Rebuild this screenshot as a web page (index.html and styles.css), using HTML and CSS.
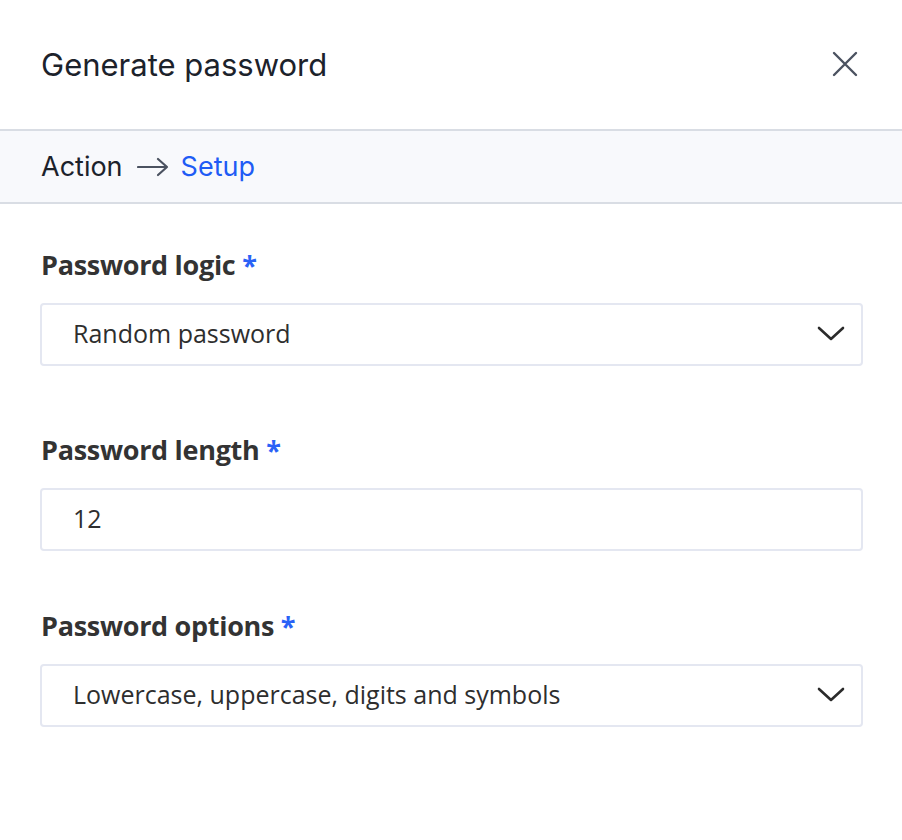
FILE: index.html
```html
<!DOCTYPE html>
<html>
<head>
<meta charset="utf-8">
<link rel="stylesheet" href="styles.css">
</head>
<body>
<div class="panel">
  <header class="head">
    <h1 class="title">Generate password</h1>
    <button class="close" aria-label="Close">
      <svg width="26" height="26" viewBox="0 0 26 26"><path d="M2 2 L24 24 M24 2 L2 24" stroke="#4b5260" stroke-width="2.4" stroke-linecap="round" fill="none"/></svg>
    </button>
  </header>
  <nav class="crumbs">
    <span class="crumb">Action</span>
    <svg class="arrow" width="32" height="20" viewBox="0 0 32 20"><path d="M1 10 H30 M21 2 L30 10 L21 18" stroke="#4b5260" stroke-width="2.2" fill="none" stroke-linecap="round" stroke-linejoin="round"/></svg>
    <span class="crumb active">Setup</span>
  </nav>
  <form class="form">
    <div class="field f1">
      <label class="label">Password logic <span class="req">*</span></label>
      <div class="box select"><span>Random password</span>
        <svg width="28" height="16" viewBox="0 0 28 16"><path d="M2 2 L14 13 L26 2" stroke="#2b2b2b" stroke-width="2.6" fill="none" stroke-linecap="round" stroke-linejoin="round"/></svg>
      </div>
    </div>
    <div class="field f2">
      <label class="label">Password length <span class="req">*</span></label>
      <div class="box"><span>12</span></div>
    </div>
    <div class="field f3">
      <label class="label">Password options <span class="req">*</span></label>
      <div class="box select"><span>Lowercase, uppercase, digits and symbols</span>
        <svg width="28" height="16" viewBox="0 0 28 16"><path d="M2 2 L14 13 L26 2" stroke="#2b2b2b" stroke-width="2.6" fill="none" stroke-linecap="round" stroke-linejoin="round"/></svg>
      </div>
    </div>
  </form>
</div>
</body>
</html>
```
FILE: styles.css
```css
* { box-sizing: border-box; }
html, body { margin: 0; padding: 0; background: #fff; }
body { font-family: "Open Sans", "Noto Sans", sans-serif; }
.panel { width: 902px; height: 840px; }
.head {
  height: 129px;
  display: flex;
  align-items: center;
  justify-content: space-between;
  padding: 0 44px 0 41px;
}
.title {
  margin: 0;
  font-family: Inter, "Noto Sans", sans-serif;
  font-weight: 400;
  font-size: 31px;
  line-height: 40px;
  color: #1c222b;
}
.close { border: 0; background: none; padding: 0; display: flex; margin-top: -2px; }
.crumbs {
  height: 75px;
  background: #f8f9fc;
  border-top: 2px solid #d9dde4;
  border-bottom: 2px solid #d9dde4;
  display: flex;
  align-items: center;
  padding: 0 41px;
  font-family: Inter, "Noto Sans", sans-serif;
  font-size: 27px;
}
.crumb { color: #1c222b; }
.crumb.active { color: #1f5cf5; }
.arrow { margin: 1px 12px 0 14px; }
.form { padding: 0 39px 0 40px; }
.label {
  display: block;
  font-weight: 700;
  font-size: 27px;
  line-height: 32px;
  color: #333333;
  margin-left: 1px;
  letter-spacing: -0.3px;
}
.req { color: #2a62f6; }
.f1 { padding-top: 45px; }
.f2 { padding-top: 68px; }
.f3 { padding-top: 59px; }
.box {
  margin-top: 22px;
  height: 63px;
  border: 2px solid #e4e7f1;
  border-radius: 4px;
  display: flex;
  align-items: center;
  justify-content: space-between;
  padding: 0 16px 3px 31px;
  font-size: 25px;
  color: #2e2e2e;
}
.box svg { margin-top: 2px; }
```
